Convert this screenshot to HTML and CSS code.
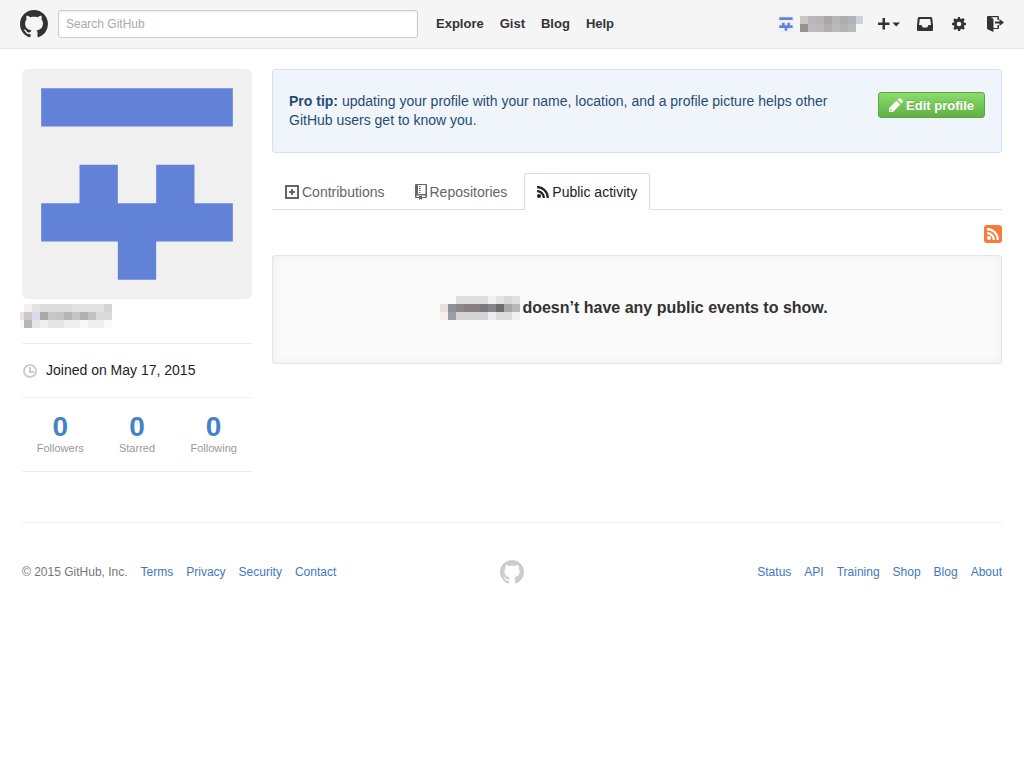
FILE: index.html
```html
<!DOCTYPE html>
<html lang="en">
<head>
<meta charset="utf-8">
<meta name="viewport" content="width=device-width, initial-scale=1">
<title>GitHub profile</title>
<link rel="stylesheet" href="styles.css">
</head>
<body>
<svg class="sprite" aria-hidden="true">
  <symbol id="mark" viewBox="0 0 16 16"><path d="M8 0C3.58 0 0 3.58 0 8c0 3.54 2.29 6.53 5.47 7.59.4.07.55-.17.55-.38 0-.19-.01-.82-.01-1.49-2.01.37-2.53-.49-2.69-.94-.09-.23-.48-.94-.82-1.13-.28-.15-.68-.52-.01-.53.63-.01 1.08.58 1.23.82.72 1.21 1.87.87 2.33.66.07-.52.28-.87.51-1.07-1.78-.2-3.64-.89-3.64-3.95 0-.87.31-1.59.82-2.15-.08-.2-.36-1.02.08-2.12 0 0 .67-.21 2.2.82.64-.18 1.32-.27 2-.27s1.36.09 2 .27c1.53-1.04 2.2-.82 2.2-.82.44 1.1.16 1.92.08 2.12.51.56.82 1.27.82 2.15 0 3.07-1.87 3.75-3.65 3.95.29.25.54.73.54 1.48 0 1.07-.01 1.93-.01 2.2 0 .21.15.46.55.38A8.01 8.01 0 0 0 16 8c0-4.42-3.58-8-8-8z"/></symbol>
  <symbol id="identicon" viewBox="0 0 12 12"><path fill="#f0f0f0" d="M0 0h12v12H0z"/><path fill="#6182d6" d="M1 1h10v2H1zM3 5h2v2h2V5h2v2h2v2H7v2H5V9H1V7h2z"/></symbol>
  <symbol id="rss" viewBox="0 0 12 12"><circle cx="2" cy="10" r="2"/><path fill="none" stroke="currentColor" stroke-width="2.200" d="M0 5.200A6.600 6.600 0 0 1 6.800 12M0 1.200A10.700 10.700 0 0 1 10.800 12"/></symbol>
</svg>

<header class="header">
  <div class="header-inner">
    <a class="logo" href="#" aria-label="GitHub home"><svg width="28" height="28"><use href="#mark"/></svg></a>
    <form class="search" role="search"><input class="search-input" type="text" placeholder="Search GitHub" aria-label="Search GitHub"></form>
    <nav class="nav" aria-label="Main">
      <a href="#">Explore</a><a href="#">Gist</a><a href="#">Blog</a><a href="#">Help</a>
    </nav>
    <div class="user-nav">
      <a class="account" href="#" aria-label="Your profile">
        <svg width="16" height="16"><use href="#identicon"/></svg>
        <svg width="63" height="16" viewBox="0 0 63 16" shape-rendering="crispEdges">
          <path fill="#c9c8c6" d="M0 0h8v8H0z"/><path fill="#b9b9bb" d="M8 0h8v8H8z"/><path fill="#b5b4b7" d="M16 0h8v8h-8z"/><path fill="#aca7a7" d="M24 0h8v8h-8z"/><path fill="#b5b5ba" d="M32 0h8v8h-8z"/><path fill="#aeadae" d="M40 0h8v8h-8z"/><path fill="#b3b3b5" d="M48 0h8v8h-8z"/><path fill="#d0d1d8" d="M56 0h7v8h-7z"/>
          <path fill="#97928f" d="M0 8h8v8H0z"/><path fill="#bcbcc0" d="M8 8h8v8H8z"/><path fill="#bababb" d="M16 8h8v8h-8z"/><path fill="#b1aead" d="M24 8h8v8h-8z"/><path fill="#bababc" d="M32 8h8v8h-8z"/><path fill="#b3b3b4" d="M40 8h8v8h-8z"/><path fill="#bbb" d="M48 8h8v8h-8z"/><path fill="#f6f7f7" d="M56 8h7v8h-7z"/>
        </svg>
      </a>
      <button class="icon-button create" type="button" aria-label="Create new"><svg width="22" height="14" viewBox="0 0 22 14"><path d="M4.500 1H7v4.500h4.500V8H7v4.500H4.500V8H0V5.500h4.500zM14.500 5.500h7.500L18.200 9.500z"/></svg></button>
      <a class="icon-button inbox" href="#" aria-label="Notifications"><svg width="16" height="14" viewBox="0 0 16 14"><path fill-rule="evenodd" d="M2 0h12q1 0 1.200 1L16 8v5q0 1-1 1H1q-1 0-1-1V8l.8-7Q1 0 2 0zm.8 2L2 8h2.500l1.300 2.500h4.400L11.500 8H14l-.8-6z"/></svg></a>
      <a class="icon-button gear" href="#" aria-label="Settings"><svg width="14" height="14" viewBox="0 1 14 14"><path d="M14 9.100V6.900l-1.940-.5-.45-1.090 1.100-1.700-1.550-1.500-1.700 1-1.090-.45L7.900 1H6.100l-.56 1.740-1.110.45-1.700-1-1.500 1.500 1 1.700-.45 1.090L0 6.900v2.200l1.940.5.45 1.090-1.050 1.700 1.500 1.500 1.700-1 1.090.45L6.100 15h1.900l.5-1.800 1.110-.45 1.700 1 1.500-1.500-1-1.700.3-1zM7 10.300a2.300 2.300 0 1 1 0-4.600 2.300 2.300 0 0 1 0 4.600z"/></svg></a>
      <button class="icon-button" type="button" aria-label="Sign out"><svg width="17" height="16" viewBox="0 0 17 16"><path d="M1 0h10q1 0 1 1v3h-1.500V1.300H4L6.500 3v9h4V9H12v3q0 1-1 1H6.500v3L1 13.500q-1-.5-1-1.300V1q0-1 1-1zM8 5.500h4.500V3L17 6.500 12.500 10V7.500H8z"/></svg></button>
    </div>
  </div>
</header>

<div class="container">
  <div class="profile">
    <aside class="sidebar">
      <svg class="avatar" viewBox="0 0 12 12" role="img" aria-label="Avatar"><use href="#identicon"/></svg>
      <h1 class="username">
        <svg width="92" height="24" viewBox="0 0 92 24" shape-rendering="crispEdges" role="img" aria-label="Username">
          <path fill="#f1f1f1" d="M4 0h8v8H4z"/><path fill="#e3e3e4" d="M12 0h8v8h-8z"/><path fill="#dcdcdc" d="M20 0h32v8H20z"/><path fill="#e2e2e2" d="M52 0h32v8H52z"/><path fill="#d4d4d5" d="M84 0h8v8h-8z"/>
          <path fill="#eae0d7" d="M0 8h4v8H0z"/><path fill="#cac8c8" d="M4 8h8v8H4z"/><path fill="#d8dce6" d="M12 8h8v8h-8z"/><path fill="#aaa9a8" d="M20 8h8v8h-8z"/><path fill="#c6c9cb" d="M28 8h8v8h-8z"/><path fill="#c4c3c0" d="M36 8h8v8h-8z"/><path fill="#b3b4b6" d="M44 8h8v8h-8z"/><path fill="#c6c6c8" d="M52 8h8v8h-8z"/><path fill="#b0b0b0" d="M60 8h8v8h-8z"/><path fill="#c2c2c2" d="M68 8h8v8h-8z"/><path fill="#dadadb" d="M76 8h16v8H76z"/>
          <path fill="#f8f8f8" d="M0 16h4v8H0z"/><path fill="#b8b7b6" d="M4 16h8v8H4z"/><path fill="#e4e5e9" d="M12 16h8v8h-8z"/><path fill="#efefef" d="M20 16h8v8h-8z"/><path fill="#e3e5e8" d="M28 16h8v8h-8z"/><path fill="#e8e6e3" d="M36 16h8v8h-8z"/><path fill="#eeeeef" d="M44 16h16v8H44z"/><path fill="#f8f8f8" d="M60 16h8v8h-8z"/><path fill="#efefef" d="M68 16h16v8H68z"/><path fill="#f9f9fb" d="M84 16h8v8h-8z"/>
        </svg>
      </h1>
      <p class="joined"><svg class="clock" width="14" height="14" viewBox="0 0 14 14" aria-hidden="true"><circle cx="7" cy="7" r="6"/><path d="M7 3v5h4"/></svg>Joined on May 17, 2015</p>
      <div class="stats">
        <a href="#"><strong>0</strong><span>Followers</span></a>
        <a href="#"><strong>0</strong><span>Starred</span></a>
        <a href="#"><strong>0</strong><span>Following</span></a>
      </div>
    </aside>

    <main class="main">
      <section class="tip">
        <p><strong>Pro tip:</strong> updating your profile with your name, location, and a profile picture helps other GitHub users get to know you.</p>
        <button class="edit" type="button"><svg width="14" height="14" viewBox="0 0 14 14" aria-hidden="true"><path fill-rule="evenodd" d="M0 10l7.500-7.300 3.800 3.800L4 14H0zm1.300 1v1.700H3V12h-.8v-1zM8.500 1.800L10 .4q.8-.8 1.600 0l2 2q.8.8 0 1.600l-1.400 1.500z"/></svg>Edit profile</button>
      </section>
      <nav class="tabs" aria-label="Profile">
        <a class="tab" href="#"><svg width="14" height="14" viewBox="0 0 14 14"><path fill-rule="evenodd" d="M0 0h14v14H0zM2 2v10h10V2zM6 4h2v2h2v2H8v2H6V8H4V6h2z"/></svg>Contributions</a>
        <a class="tab" href="#"><svg width="12" height="16" viewBox="0 0 12 16"><path fill-rule="evenodd" d="M1 0h10q1 0 1 1v12q0 1-1 1H7v2l-1.500-1.300L4 16v-2H1q-1 0-1-1V1q0-1 1-1zm2 1v9h7.500V1zM1.500 11.500V13H4v-1h3v1h3.500v-1.500zM4 2h1.500v1H4zm0 2h1.500v1H4zm0 2h1.500v1H4zm0 2h1.500v1H4z"/></svg>Repositories</a>
        <a class="tab selected" href="#" aria-current="page"><svg width="12" height="12"><use href="#rss"/></svg>Public activity</a>
      </nav>
      <div class="feed"><a class="feed-link" href="#" aria-label="Activity feed"><svg width="12" height="12"><use href="#rss"/></svg></a></div>
      <section class="blank">
        <h2>
          <svg width="80" height="24" viewBox="0 0 80 24" shape-rendering="crispEdges" role="img" aria-label="Username">
            <path fill="#dededf" d="M16 0h32v8H16z"/><path fill="#f0f0f1" d="M48 0h8v8h-8z"/><path fill="#e4e4e5" d="M56 0h8v8h-8z"/><path fill="#d9d9da" d="M64 0h8v8h-8z"/><path fill="#e0e0e1" d="M72 0h8v8h-8z"/>
            <path fill="#e6e1dc" d="M0 8h8v8H0z"/><path fill="#8c9098" d="M8 8h8v8H8z"/><path fill="#8a888a" d="M16 8h8v8h-8z"/><path fill="#85807d" d="M24 8h16v8H24z"/><path fill="#787a80" d="M40 8h8v8h-8z"/><path fill="#858586" d="M48 8h8v8h-8z"/><path fill="#6d6e73" d="M56 8h8v8h-8z"/><path fill="#a7a7a7" d="M64 8h8v8h-8z"/><path fill="#b9b9bc" d="M72 8h8v8h-8z"/>
            <path fill="#f3efed" d="M0 16h8v8H0z"/><path fill="#9d9ea5" d="M8 16h8v8H8z"/><path fill="#d4d4d5" d="M16 16h32v8H16z"/><path fill="#ebedef" d="M48 16h8v8h-8z"/><path fill="#dcdcdd" d="M56 16h16v8H56z"/><path fill="#eff0f0" d="M72 16h8v8h-8z"/>
          </svg>
          <span>doesn’t have any public events to show.</span>
        </h2>
      </section>
    </main>
  </div>

  <footer class="footer">
    <div class="footer-links"><span>© 2015 GitHub, Inc.</span><a href="#">Terms</a><a href="#">Privacy</a><a href="#">Security</a><a href="#">Contact</a></div>
    <a class="footer-mark" href="#" aria-label="GitHub"><svg width="24" height="24"><use href="#mark"/></svg></a>
    <nav class="footer-links end" aria-label="Footer"><a href="#">Status</a><a href="#">API</a><a href="#">Training</a><a href="#">Shop</a><a href="#">Blog</a><a href="#">About</a></nav>
  </footer>
</div>
</body>
</html>
```
FILE: styles.css
```css
* { box-sizing: border-box; }
body { margin: 0; background: #fff; color: #333; font: 14px/19px "Liberation Sans", Arial, sans-serif; }
a { color: #4078c0; text-decoration: none; }
svg { display: block; flex: none; fill: currentColor; }
h1, h2, p { margin: 0; }
button, input { font-family: inherit; }
.sprite { display: none; }

.header { background: #f5f5f5; border-bottom: 1px solid #e5e5e5; }
.header-inner { display: flex; align-items: center; max-width: 984px; height: 48px; margin: 0 auto; }
.logo { color: #333; margin-right: 10px; }
.search { flex: 0 1 360px; }
.search-input { display: block; width: 100%; height: 28px; padding: 0 7px; border: 1px solid #ccc; border-radius: 3px; background: #fff; font-size: 12px; color: #333; box-shadow: inset 0 1px 2px rgba(0,0,0,.075); }
.search-input::placeholder { color: #aaa; opacity: 1; }
.nav { display: flex; gap: 16px; margin-left: 18px; font-size: 13px; line-height: 18px; font-weight: bold; }
.nav a { color: #333; }
.user-nav { display: flex; align-items: center; margin-left: auto; }
.account { display: flex; align-items: center; gap: 6px; margin-right: 15px; }
.icon-button { display: block; padding: 0; border: 0; background: none; color: #333; cursor: pointer; }
.create { margin-right: 17px; }
.inbox { margin-right: 19px; }
.gear { margin-right: 21px; }

.container { max-width: 1024px; margin: 0 auto; padding: 20px 22px; }
.profile { display: grid; grid-template-columns: 230px 1fr; column-gap: 20px; }
.avatar { width: 100%; border-radius: 6px; }
.username { margin: 5px 0 0 -2px; padding-bottom: 15px; }
.joined { display: flex; align-items: center; gap: 9px; padding: 17px 1px; border-top: 1px solid #eee; border-bottom: 1px solid #eee; color: #222; }
.clock { fill: none; stroke: #ccc; stroke-width: 2px; }
.stats { display: grid; grid-template-columns: repeat(3, 1fr); padding: 15px 0 16px; border-bottom: 1px solid #eee; text-align: center; }
.stats strong { display: block; font-size: 28px; line-height: 28px; color: #4183c4; }
.stats span { display: block; font-size: 11px; line-height: 14px; color: #999; }

.tip { display: flex; align-items: flex-start; justify-content: space-between; gap: 32px; padding: 22px 16px; border: 1px solid #cfe3f5; border-radius: 3px; background: #f0f5fc; color: #264c72; }
.edit { display: flex; flex: none; align-items: center; gap: 3px; height: 26px; padding: 0 10px; border: 1px solid #5ca941; border-radius: 3px; background: linear-gradient(#8add6d, #60b044); color: #fff; font-size: 13px; font-weight: bold; text-shadow: 0 -1px 0 rgba(0,0,0,.15); cursor: pointer; }
.tabs { display: flex; gap: 4px; margin-top: 20px; border-bottom: 1px solid #ddd; }
.tab { display: flex; align-items: center; gap: 3px; height: 37px; margin-bottom: -1px; padding: 0 12px; border: 1px solid transparent; border-bottom: 0; border-radius: 3px 3px 0 0; color: #666; }
.selected { border-color: #ddd; background: #fff; color: #222; }
.feed { display: flex; justify-content: flex-end; margin: 15px 0 12px; }
.feed-link { padding: 3px; border-radius: 3px; background: #f77b3d; color: #fff; }
.blank { padding: 40px 30px 43px; border: 1px solid #e5e5e5; border-radius: 3px; background: #fafafa; box-shadow: inset 0 0 10px rgba(0,0,0,.05); }
.blank h2 { display: flex; align-items: center; justify-content: center; gap: 2px; padding-right: 6px; font-size: 16px; line-height: 24px; }

.footer { display: grid; grid-template-columns: 1fr auto 1fr; align-items: center; margin-top: 50px; padding: 37px 0; border-top: 1px solid #eee; font-size: 12px; color: #767676; }
.footer-links { display: flex; gap: 13px; }
.end { justify-content: flex-end; }
.footer-mark { color: #ccc; }
```
